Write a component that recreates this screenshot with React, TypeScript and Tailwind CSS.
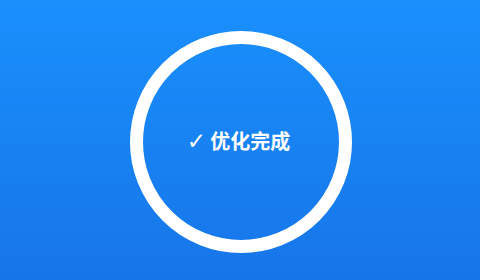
export default function App() {
  return (
    <div className="w-[480px] h-[280px] overflow-hidden bg-gradient-to-b from-[#1a90fd] to-[#1775e9] flex items-center justify-center pt-1 pl-[2px]">
      <div className="w-[222px] h-[222px] rounded-full border-[13px] border-white flex items-center justify-center">
        <span
          className="text-white text-[20px] font-bold leading-none flex items-center gap-[4px] pr-[5px] -mt-[2px]"
          style={{ fontFamily: '"Noto Sans CJK SC", "Noto Sans", sans-serif' }}
        >
          <span className="text-[23px] font-normal" style={{ fontFamily: '"DejaVu Sans", sans-serif' }}>✓</span>
          <span>优化完成</span>
        </span>
      </div>
    </div>
  )
}
